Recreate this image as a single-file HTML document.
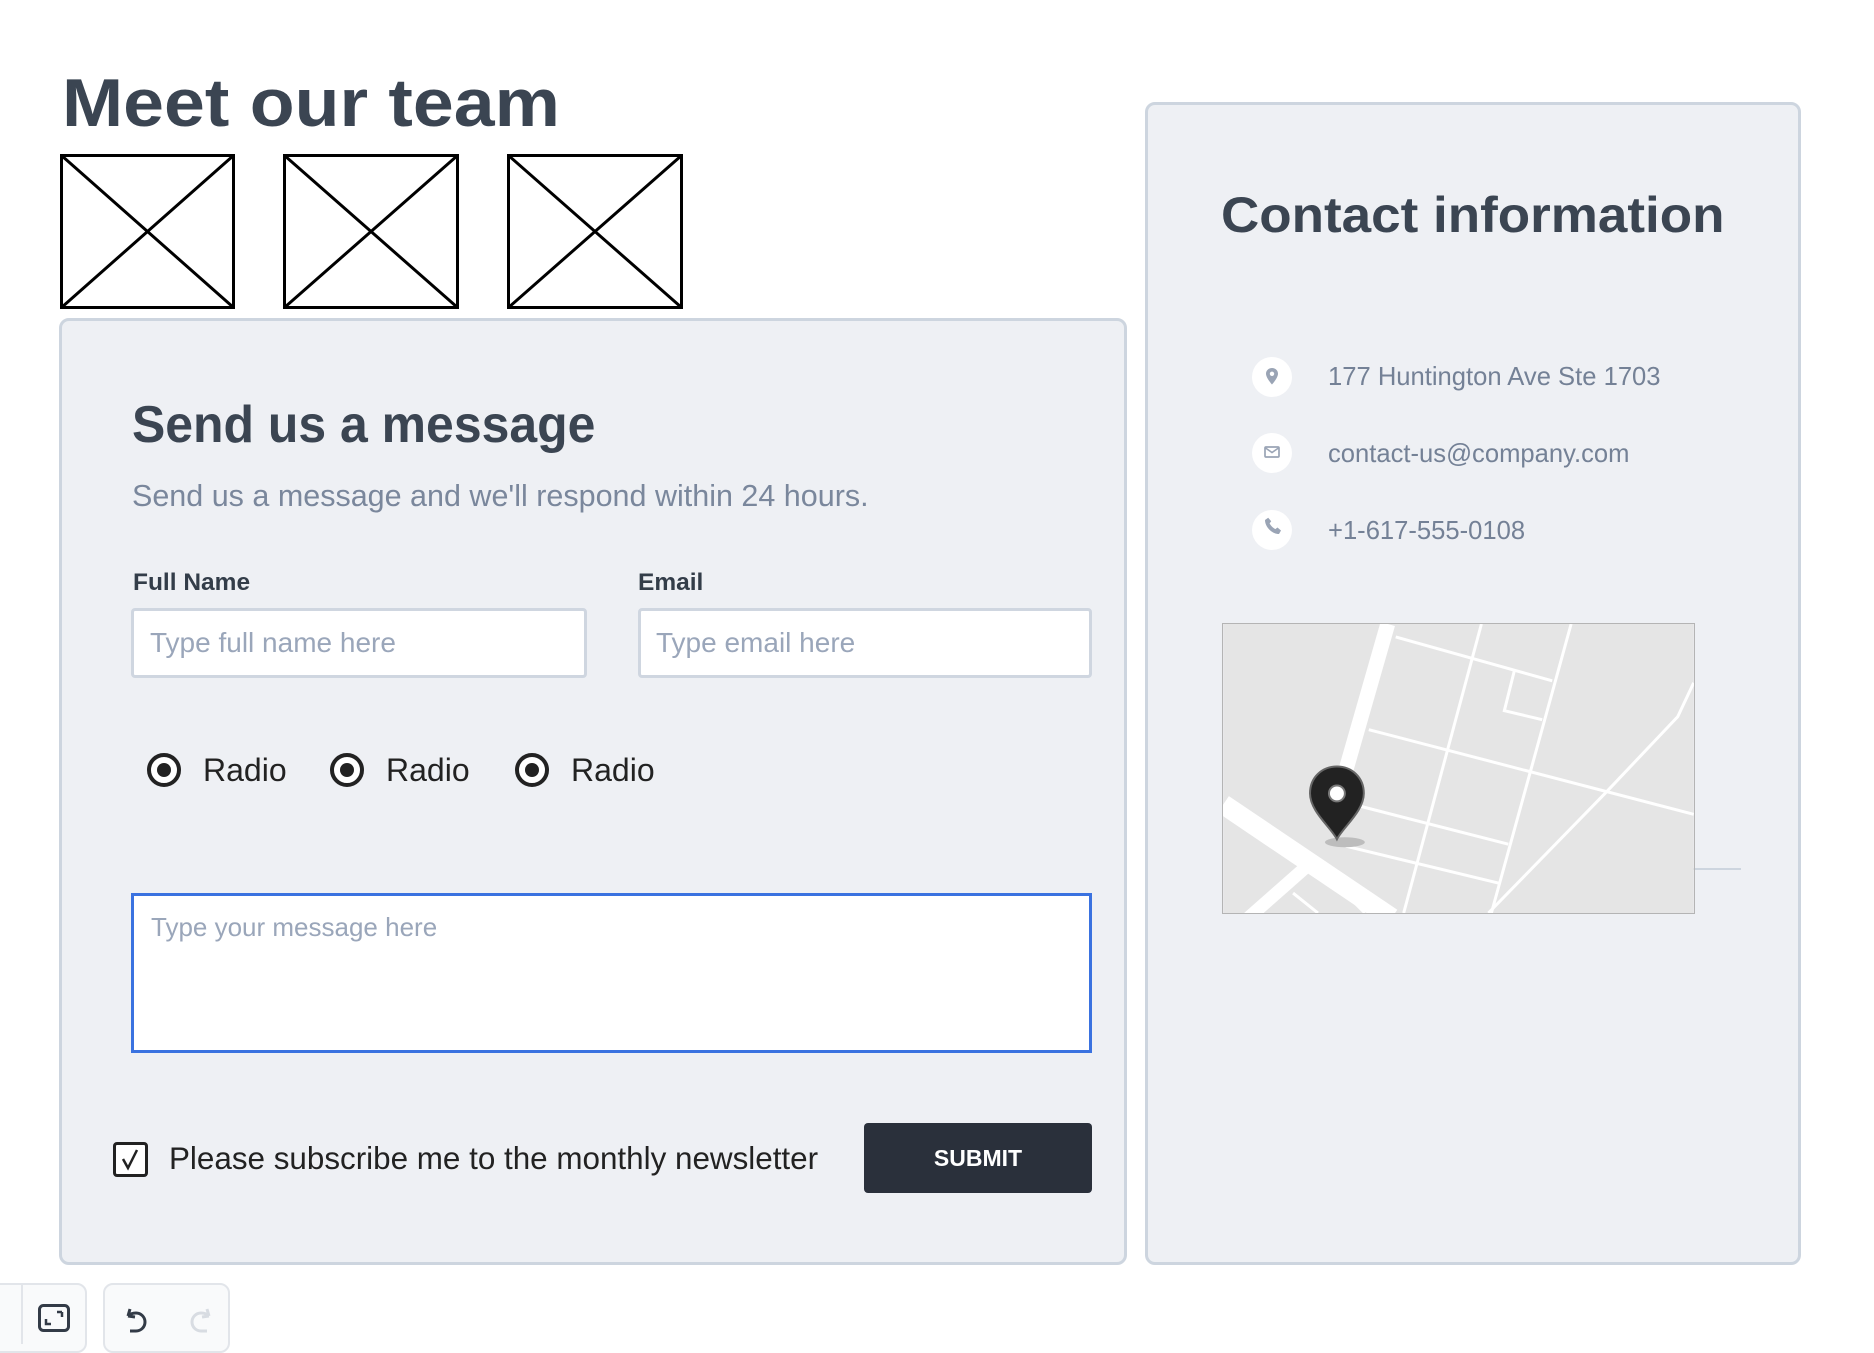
<!DOCTYPE html>
<html><head><meta charset="utf-8"><style>
*{margin:0;padding:0;box-sizing:border-box}
body{width:1874px;height:1334px;background:#fff;position:relative;overflow:hidden;font-family:"Liberation Sans",sans-serif}
.a{position:absolute;white-space:nowrap}
.h{color:#3b4552;font-weight:bold;transform-origin:left bottom;display:inline-block}
.panel{position:absolute;background:#eef0f4;border:3px solid #cdd5df;border-radius:10px}
.inp{position:absolute;background:#fff;border:3px solid #cfd6e0;border-radius:4px}
.plh{color:#9aa6ba;font-size:28px}
.ic{position:absolute;width:40px;height:40px;border-radius:50%;background:#fff}
.ct{color:#748196;font-size:25.6px}
.rad{position:absolute;width:34px;height:34px;border-radius:50%;border:4px solid #222;background:#fff}
.rad:after{content:"";position:absolute;left:6px;top:6px;width:14px;height:14px;border-radius:50%;background:#222}
</style></head><body>

<div class="a" style="left:62px;top:63px;line-height:80px"><span class="h" style="font-size:68px;transform:scaleX(1.08)">Meet our team</span></div>

<svg class="a" style="left:0;top:0" width="700" height="320">
<g fill="none" stroke="#000" stroke-width="3">
<rect x="61.5" y="155.5" width="172" height="152"/><path d="M61.5 155.5L233.5 307.5M233.5 155.5L61.5 307.5"/>
<rect x="284.5" y="155.5" width="173" height="152"/><path d="M284.5 155.5L457.5 307.5M457.5 155.5L284.5 307.5"/>
<rect x="508.5" y="155.5" width="173" height="152"/><path d="M508.5 155.5L681.5 307.5M681.5 155.5L508.5 307.5"/>
</g></svg>

<div class="panel" style="left:59px;top:318px;width:1068px;height:947px"></div>
<div class="panel" style="left:1145px;top:102px;width:656px;height:1163px"></div>

<div class="a" style="left:1221px;top:185px;line-height:60px"><span class="h" style="font-size:50px;transform:scaleX(1.06)">Contact information</span></div>

<div class="ic" style="left:1252px;top:357px"></div>
<div class="ic" style="left:1252px;top:433px"></div>
<div class="ic" style="left:1252px;top:510px"></div>
<svg class="a" style="left:1252px;top:357px" width="40" height="200">
<path d="M20 11c-3.6 0-6 2.6-6 5.8 0 4.2 6 10.7 6 10.7s6-6.5 6-10.7c0-3.2-2.4-5.8-6-5.8z" fill="#9aa4b5"/><circle cx="20" cy="16.8" r="2.2" fill="#fff"/>
<rect x="13" y="90" width="14" height="10" fill="none" stroke="#9aa4b5" stroke-width="1.7" rx="1"/><path d="M13.5 91l6.5 4.5 6.5-4.5" fill="none" stroke="#9aa4b5" stroke-width="1.6"/>
<path d="M13 163c0 7 7 14 14 14l2-3.5-3.5-3-2.2 1.6c-2.3-1.2-4.5-3.4-5.7-5.7l1.6-2.2-3-3.5z" fill="#9aa4b5"/>
</svg>
<div class="a ct" style="left:1328px;top:363px">177 Huntington Ave Ste 1703</div>
<div class="a ct" style="left:1328px;top:440px">contact-us@company.com</div>
<div class="a ct" style="left:1328px;top:517px">+1-617-555-0108</div>

<div class="a" style="left:1693px;top:868px;width:48px;height:2px;background:#cdd5df"></div>
<svg class="a" style="left:1222px;top:623px;border:1px solid #b4b4b4" width="473" height="291" viewBox="0 0 472 290">
<rect width="472" height="290" fill="#e5e5e5"/>
<g stroke="#fff" fill="none" stroke-linecap="butt">
<path d="M165 0L112 185" stroke-width="15"/>
<path d="M0 181L169 295" stroke-width="20"/>
<path d="M93 235L25 295" stroke-width="13"/>
<g stroke-width="3">
<path d="M173 13L330 57"/><path d="M259 0L181 290"/><path d="M349 0L269 290"/>
<path d="M292 47L282 87L320 96"/><path d="M146 106L472 191"/><path d="M138 183L286 221"/>
<path d="M123 223L276 260"/><path d="M472 59L456 93L383 170L266 290"/>
<path d="M96 244L142 290"/><path d="M70 270L95 290"/>
</g></g>
<ellipse cx="122" cy="219" rx="20" ry="5" fill="#bdbdbd"/>
<path d="M114 216C108 204 87 188 87 170C87 154 99 143 114 143C129 143 141 154 141 170C141 188 120 204 114 216Z" fill="#222" stroke="#666" stroke-width="2"/>
<circle cx="114" cy="170" r="8" fill="#fff" stroke="#777" stroke-width="2"/>
</svg>

<div class="a" style="left:132px;top:395px;line-height:60px"><span class="h" style="font-size:52px;transform:scaleX(.96)">Send us a message</span></div>
<div class="a" style="left:132px;top:478px;font-size:30.5px;color:#7a879c;line-height:36px">Send us a message and we'll respond within 24 hours.</div>

<div class="a" style="left:133px;top:569px;font-size:24.5px;font-weight:bold;color:#333d49">Full Name</div>
<div class="a" style="left:638px;top:569px;font-size:24.5px;font-weight:bold;color:#333d49">Email</div>
<div class="inp" style="left:131px;top:608px;width:456px;height:70px"></div>
<div class="inp" style="left:638px;top:608px;width:454px;height:70px"></div>
<div class="a plh" style="left:150px;top:627px">Type full name here</div>
<div class="a plh" style="left:656px;top:627px">Type email here</div>

<div class="rad" style="left:147px;top:753px"></div>
<div class="rad" style="left:330px;top:753px"></div>
<div class="rad" style="left:515px;top:753px"></div>
<div class="a" style="left:203px;top:752px;font-size:32px;color:#222">Radio</div>
<div class="a" style="left:386px;top:752px;font-size:32px;color:#222">Radio</div>
<div class="a" style="left:571px;top:752px;font-size:32px;color:#222">Radio</div>

<div class="a" style="left:131px;top:893px;width:961px;height:160px;background:#fff;border:3px solid #3a72e0"></div>
<div class="a" style="left:151px;top:912px;font-size:26px;color:#9aa6ba">Type your message here</div>

<div class="a" style="left:113px;top:1142px;width:35px;height:35px;border:3px solid #222;border-radius:4px;background:#fff"></div>
<svg class="a" style="left:113px;top:1142px" width="35" height="35"><path d="M10 17l5 9 9-18" fill="none" stroke="#222" stroke-width="2.5"/></svg>
<div class="a" style="left:169px;top:1141px;font-size:31.4px;color:#222">Please subscribe me to the monthly newsletter</div>
<div class="a" style="left:864px;top:1123px;width:228px;height:70px;background:#2a303b;border-radius:4px;color:#fff;font-weight:bold;font-size:23px;text-align:center;line-height:70px">SUBMIT</div>

<div class="a" style="left:-10px;top:1283px;width:97px;height:70px;border:2px solid #e2e5ea;border-radius:10px;background:#f9fafb"></div>
<div class="a" style="left:21px;top:1284px;width:2px;height:60px;background:#e2e5ea"></div>
<div class="a" style="left:103px;top:1283px;width:127px;height:70px;border:2px solid #e2e5ea;border-radius:10px;background:#f9fafb"></div>
<svg class="a" style="left:0;top:1290px" width="240" height="44">
<rect x="39.5" y="15.5" width="29" height="25" rx="4" fill="none" stroke="#333b47" stroke-width="3"/>
<path d="M46 29v5h5M62 22h-5M62 22v5" fill="none" stroke="#333b47" stroke-width="2.5"/>
<path d="M128 26c2-2 5-3 8-3 5 0 9 4 9 9s-4 9-9 9h-6M128 26l2-7M128 26l7 1" fill="none" stroke="#333b47" stroke-width="3"/>
<path d="M209 26c-2-2-5-3-8-3-5 0-9 4-9 9s4 9 9 9h6M209 26l-2-7M209 26l-7 1" fill="none" stroke="#d8dce2" stroke-width="3"/>
</svg>
</body></html>
